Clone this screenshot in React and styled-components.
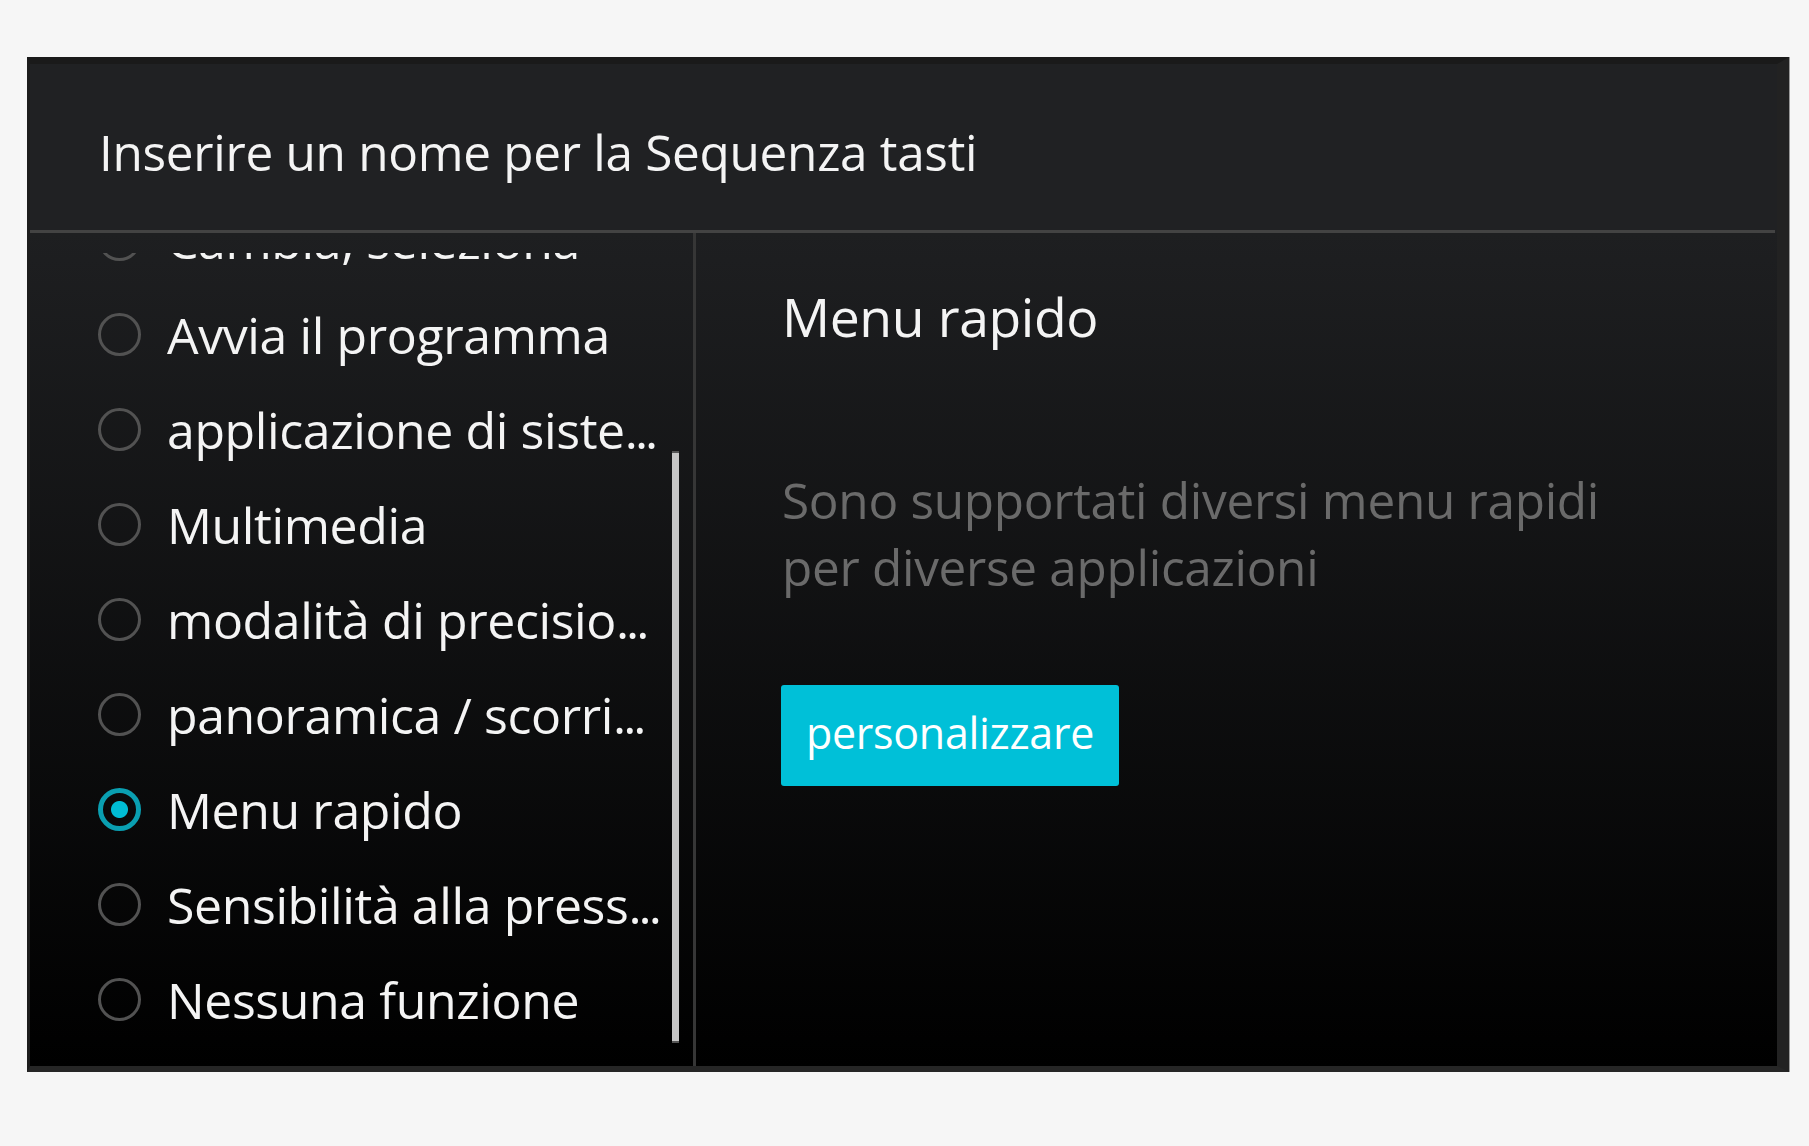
import React from "react";
import styled, { createGlobalStyle } from "styled-components";

const GlobalStyle = createGlobalStyle`
  html, body {
    margin: 0;
    padding: 0;
    background: #f6f6f6;
  }
  body {
    font-family: "Open Sans", "Noto Sans", sans-serif;
  }
`;

// cut = label was shortened by the app, show the dots
const items = [
  { label: "Cambia, seleziona", checked: false },
  { label: "Avvia il programma", checked: false },
  { label: "applicazione di siste", cut: true, checked: false },
  { label: "Multimedia", checked: false },
  { label: "modalità di precisio", cut: true, checked: false },
  { label: "panoramica / scorri", cut: true, checked: false },
  { label: "Menu rapido", checked: true },
  { label: "Sensibilità alla press", cut: true, checked: false },
  { label: "Nessuna funzione", checked: false },
];

const App = () => {
  return (
    <Page>
      <GlobalStyle />
      <Window>
        <Header>
          <Title>Inserire un nome per la Sequenza tasti</Title>
        </Header>
        <Separator />
        <Body>
          <LeftPane>
            <Viewport>
              <List $offset={61}>
                {items.map((it) => (
                  <Row key={it.label}>
                    <Radio $checked={it.checked} />
                    <RowLabel>
                      {it.label}
                      {it.cut && <Dots>...</Dots>}
                    </RowLabel>
                  </Row>
                ))}
              </List>
            </Viewport>
            <ScrollThumb />
          </LeftPane>
          <Divider />
          <RightPane>
            <PaneTitle>Menu rapido</PaneTitle>
            <Description>
              Sono supportati diversi menu rapidi
              <br />
              per diverse applicazioni
            </Description>
            <Button>personalizzare</Button>
          </RightPane>
        </Body>
      </Window>
    </Page>
  );
};

export default App;

const Page = styled.div`
  width: 1809px;
  height: 1146px;
  box-sizing: border-box;
  padding: 57px 0 0 27px;
`;

const Window = styled.div`
  width: 1762px;
  height: 1015px;
  box-sizing: border-box;
  display: flex;
  flex-direction: column;
  border-top: 7px solid #1a1a1a;
  border-left: 3px solid #1c1c1c;
  border-right: 12px solid #222222;
  border-bottom: 6px solid #262626;
  box-shadow: 1px 0 0 #9a9a9a;
  background: #202123;
`;

const Header = styled.div`
  height: 166px;
  flex-shrink: 0;
  display: flex;
  align-items: center;
  padding: 10px 0 0 69px;
  box-sizing: border-box;
  background: #202123;
`;

const Title = styled.div`
  color: #f4f4f4;
  font-size: 49.5px;
  line-height: 64px;
  letter-spacing: -0.3px;
`;

const Separator = styled.div`
  height: 3px;
  margin-right: 2px;
  background: #434343;
  flex-shrink: 0;
`;

const Body = styled.div`
  flex: 1;
  display: flex;
  background: linear-gradient(to bottom, #1e1f21 0%, #000000 100%);
`;

const LeftPane = styled.div`
  width: 663px;
  position: relative;
  padding-top: 20px;
  box-sizing: border-box;
`;

const Viewport = styled.div`
  height: 793px;
  overflow: hidden;
`;

const List = styled.div`
  margin-top: ${(p) => -p.$offset}px;
  display: flex;
  flex-direction: column;
`;

const Row = styled.div`
  height: 95px;
  display: flex;
  align-items: center;
  padding-left: 68px;
  gap: 26px;
`;

const Radio = styled.span`
  width: 43px;
  height: 43px;
  box-sizing: border-box;
  border-radius: 50%;
  flex-shrink: 0;
  border: ${(p) => (p.$checked ? "5px solid #0a9fb1" : "3px solid #525252")};
  background: ${(p) =>
    p.$checked
      ? "radial-gradient(circle, #00bcd4 0 8px, transparent 9px)"
      : "transparent"};
`;

const RowLabel = styled.span`
  color: #f4f4f4;
  font-size: 50px;
  line-height: 64px;
  white-space: nowrap;
  letter-spacing: -0.4px;
`;

const Dots = styled.span`
  letter-spacing: -3px;
`;

const ScrollThumb = styled.div`
  position: absolute;
  left: 642px;
  top: 218px;
  width: 7px;
  height: 592px;
  background: #c6c6c6;
  border-top: 2px solid #555;
  border-bottom: 2px solid #555;
  box-sizing: border-box;
`;

const Divider = styled.div`
  width: 3px;
  background: #363636;
  flex-shrink: 0;
`;

const RightPane = styled.div`
  flex: 1;
  padding: 52px 0 0 86px;
  display: flex;
  flex-direction: column;
  align-items: flex-start;
`;

const PaneTitle = styled.div`
  color: #f4f4f4;
  font-size: 53.5px;
  line-height: 64px;
  letter-spacing: -0.4px;
`;

const Description = styled.div`
  margin-top: 118px;
  color: #6a6a6a;
  font-size: 49.5px;
  line-height: 67px;
  letter-spacing: -0.3px;
`;

const Button = styled.button`
  margin-top: 84px;
  margin-left: -1px;
  width: 338px;
  height: 101px;
  border: none;
  border-radius: 3px;
  background: #00c0d8;
  color: #ffffff;
  font-family: "Open Sans", "Noto Sans", sans-serif;
  font-size: 43px;
  letter-spacing: -0.3px;
  padding: 0 0 6px 0;
`;
